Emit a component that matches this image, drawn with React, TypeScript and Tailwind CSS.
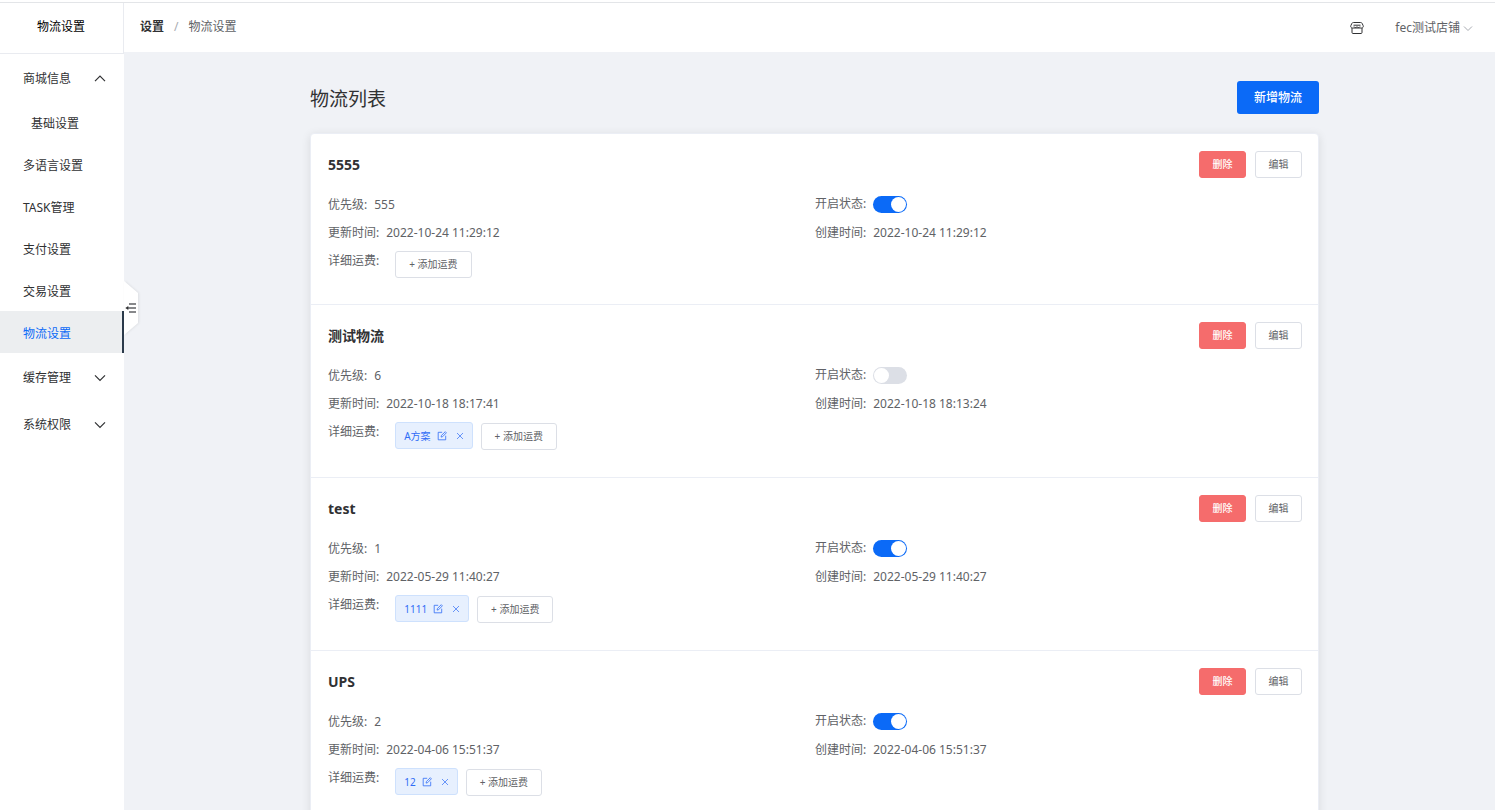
import { useState } from "react";
import type { ReactNode } from "react";

type Rate = { id: number; name: string };
type Carrier = {
  id: number;
  name: string;
  priority: number;
  enabled: boolean;
  updatedAt: string;
  createdAt: string;
  rates: Rate[];
};

const carriers: Carrier[] = [
  { id: 1, name: "5555", priority: 555, enabled: true, updatedAt: "2022-10-24 11:29:12", createdAt: "2022-10-24 11:29:12", rates: [] },
  { id: 2, name: "测试物流", priority: 6, enabled: false, updatedAt: "2022-10-18 18:17:41", createdAt: "2022-10-18 18:13:24", rates: [{ id: 1, name: "A方案" }] },
  { id: 3, name: "test", priority: 1, enabled: true, updatedAt: "2022-05-29 11:40:27", createdAt: "2022-05-29 11:40:27", rates: [{ id: 2, name: "1111" }] },
  { id: 4, name: "UPS", priority: 2, enabled: true, updatedAt: "2022-04-06 15:51:37", createdAt: "2022-04-06 15:51:37", rates: [{ id: 3, name: "12" }] },
];

const links = ["多语言设置", "TASK管理", "支付设置", "交易设置", "物流设置"];

function Chevron({ up = false }: { up?: boolean }) {
  return (
    <svg viewBox="0 0 12 12" className="size-3 shrink-0" fill="none" stroke="currentColor" strokeWidth="1.2" aria-hidden="true">
      <path d={up ? "M1 8.2 6 3.2l5 5" : "M1 3.3l5 5 5-5"} />
    </svg>
  );
}

function StoreIcon() {
  return (
    <svg viewBox="0 0 14 14" className="size-3.5" fill="none" stroke="#303133" strokeWidth="1" strokeLinejoin="round" aria-hidden="true">
      <path d="M3.4 1.500h7.200c.7 0 1.200.3 1.500.9l1 2.100c.6 1.300-.2 2.500-1.600 2.500h-9C1.100 7 .3 5.800.9 4.500l1-2.100c.3-.6.800-.9 1.500-.9z" />
      <path d="M3.500 4.200h7M4 5.600c.5 1.200 2.300 1.200 3 0 .7 1.200 2.500 1.200 3 0M2 7v4.500c0 .6.400 1 1 1h8c.6 0 1-.4 1-1V7" />
    </svg>
  );
}

function FoldIcon() {
  return (
    <svg viewBox="0 0 12 10" className="h-2.5 w-3" fill="none" stroke="#606266" strokeWidth="1.3" aria-hidden="true">
      <path d="M4 1h7M3 5h8M4 9h7" />
      <path d="M0.300 5 3.300 2.900v4.200z" fill="#303133" stroke="none" />
    </svg>
  );
}

function EditIcon() {
  return (
    <svg viewBox="0 0 10 10" className="size-2.5" fill="none" stroke="currentColor" strokeWidth="0.8" aria-hidden="true">
      <path d="M5.200 1.300H1.200v7.500h7.500V4.700" />
      <path d="M4.100 6.100l.3-1.600L8.300.7l1.100 1.100-3.800 3.900z" />
    </svg>
  );
}

function CloseIcon() {
  return (
    <svg viewBox="0 0 8 8" className="size-2" fill="none" stroke="currentColor" strokeWidth="0.7" aria-hidden="true">
      <path d="M1 1l6 6M7 1 1 7" />
    </svg>
  );
}

function SmallButton({ children, danger = false }: { children: ReactNode; danger?: boolean }) {
  return (
    <button
      type="button"
      className={
        danger
          ? "h-[27px] w-[47px] rounded-[3px] border border-[#f56c6c] bg-[#f56c6c] pb-0.5 text-[10px] font-medium leading-none text-white"
          : "h-[27px] w-[47px] rounded-[3px] border border-[#dcdfe6] bg-white pb-0.5 text-[10px] leading-none text-[#606266]"
      }
    >
      {children}
    </button>
  );
}

function Field({ label, children }: { label: string; children: ReactNode }) {
  return (
    <div className="flex h-7 items-center gap-[7px] pt-0.5">
      <span>{label}:</span>
      {children}
    </div>
  );
}

function CarrierSection({ carrier }: { carrier: Carrier }) {
  const [enabled, setEnabled] = useState(carrier.enabled);
  const hasRates = carrier.rates.length > 0;
  return (
    <section className="border-b border-[#ebeef5] pt-[17px] pr-4 pb-[26px] pl-[17px]">
      <div className="flex h-[27px] items-center justify-between">
        <h2 className="text-sm font-bold leading-5 text-[#303133]">{carrier.name}</h2>
        <div className="flex gap-[9px]">
          <SmallButton danger>删除</SmallButton>
          <SmallButton>编辑</SmallButton>
        </div>
      </div>
      <div className="mt-3 grid grid-cols-2">
        <Field label="优先级">{carrier.priority}</Field>
        <label className="flex h-7 items-center gap-[7px]">
          <span>开启状态:</span>
          <input
            type="checkbox"
            role="switch"
            checked={enabled}
            onChange={(e) => setEnabled(e.target.checked)}
            className="flex h-[17px] w-[34px] appearance-none items-center rounded-full bg-[#dcdfe6] px-px before:size-[15px] before:rounded-full before:bg-white checked:justify-end checked:bg-[#0b6af7]"
          />
        </label>
        <Field label="更新时间">{carrier.updatedAt}</Field>
        <Field label="创建时间">{carrier.createdAt}</Field>
      </div>
      <div className="flex items-start gap-4">
        <span className="pt-px leading-7">详细运费:</span>
        <div className={hasRates ? "flex min-h-[34px] items-start gap-2 pt-[5px]" : "flex h-8 items-start pt-[5px]"}>
          {carrier.rates.map((rate) => (
            <span key={rate.id} className="flex h-[27px] items-center rounded-[3px] border border-[#cee1fd] bg-[#e7f0fe] px-2 text-[10px] leading-none text-[#2f6cf6]">
              {rate.name}
              <button type="button" aria-label="编辑运费" className="ml-1.5">
                <EditIcon />
              </button>
              <button type="button" aria-label="删除运费" className="ml-[9px]">
                <CloseIcon />
              </button>
            </span>
          ))}
          <div className={hasRates ? "flex pt-px" : "flex"}>
            <button type="button" className="h-[27px] rounded-[3px] border border-[#dcdfe6] bg-white px-[13px] pb-0.5 text-[10px] leading-none text-[#606266]">
              + 添加运费
            </button>
          </div>
        </div>
      </div>
    </section>
  );
}

function Sidebar() {
  return (
    <aside className="relative flex w-31 shrink-0 flex-col bg-white text-[#303133]">
      <div className="flex h-[51px] shrink-0 items-center justify-center border-r border-b border-[#e9ebf0] pr-px pb-0.5 text-black">物流设置</div>
      <nav className="flex flex-col">
        <button type="button" className="flex h-[47px] items-center justify-between pt-0.5 pr-[18px] pl-[23px]">
          商城信息 <Chevron up />
        </button>
        <a href="#basic" className="flex h-[42px] items-center pt-[3px] pl-[31px]">基础设置</a>
        {links.map((text) => (
          <a
            key={text}
            href={"#" + text}
            className={
              text === "物流设置"
                ? "flex h-[42px] items-center border-r-2 border-[#2b3a4b] bg-[#eceef0] pt-[3px] pl-[23px] text-[#0b6af7]"
                : "flex h-[42px] items-center pt-[3px] pl-[23px]"
            }
          >
            {text}
          </a>
        ))}
        <button type="button" className="flex h-[47px] items-center justify-between pt-[3px] pr-[18px] pl-[23px]">
          缓存管理 <Chevron />
        </button>
        <button type="button" className="flex h-[47px] items-center justify-between pt-[3px] pr-[18px] pl-[23px]">
          系统权限 <Chevron />
        </button>
      </nav>
      <button
        type="button"
        aria-label="收起菜单"
        className="absolute top-[278px] left-full z-10 drop-shadow-[1px_0_1px_rgba(0,0,0,0.08)]"
      >
        <span className="flex h-[54px] w-3.5 items-center justify-center bg-white [clip-path:polygon(0_0,100%_22%,100%_78%,0_100%)]">
          <FoldIcon />
        </span>
      </button>
    </aside>
  );
}

export default function App() {
  return (
    <div className="flex h-screen flex-col bg-white pt-0.5 font-['Noto_Sans','Noto_Sans_CJK_SC',sans-serif] text-xs text-[#606266]">
      <div className="flex min-h-0 flex-1 border-t border-[#e3e5e8]">
        <Sidebar />
        <div className="flex min-w-0 flex-1 flex-col">
          <header className="flex h-[49px] shrink-0 items-center justify-between bg-white pr-[22px] pl-4">
            <nav className="flex items-center gap-2.5 pb-0.5">
              <a href="#settings" className="font-bold text-[#303133]">设置</a>
              <span className="text-[#a8abb2]">/</span>
              <span>物流设置</span>
            </nav>
            <div className="flex items-center gap-[31px] pt-px">
              <button type="button" aria-label="店铺">
                <StoreIcon />
              </button>
              <button type="button" className="flex items-center gap-[3px]">
                fec测试店铺
                <svg viewBox="0 0 10 10" className="size-2.5" fill="none" stroke="#a8abb2" strokeWidth="1" aria-hidden="true">
                  <path d="M1 3.500l4 4 4-4" />
                </svg>
              </button>
            </div>
          </header>
          <main className="min-h-0 flex-1 overflow-y-auto bg-[#f0f2f6] pt-[29px] pl-2.5 [scrollbar-width:none]">
            <div className="mx-auto max-w-[1009px]">
              <div className="flex h-[33px] items-center justify-between">
                <h1 className="pt-0.5 text-[19px] leading-7 text-[#303133]">物流列表</h1>
                <button type="button" className="h-[33px] rounded-[3px] bg-[#0b6af7] px-[17px] font-medium text-white">新增物流</button>
              </div>
              <div className="mt-[19px] rounded-[4px] border border-[#ebeef5] bg-white shadow-[0_2px_10px_rgba(0,0,0,0.1)]">
                {carriers.map((carrier) => (
                  <CarrierSection key={carrier.id} carrier={carrier} />
                ))}
              </div>
            </div>
          </main>
        </div>
      </div>
    </div>
  );
}
